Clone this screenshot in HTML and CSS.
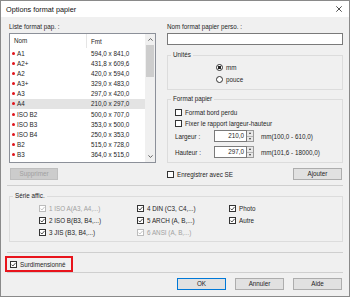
FILE: index.html
```html
<!DOCTYPE html>
<html>
<head>
<meta charset="utf-8">
<title>Options format papier</title>
<link rel="stylesheet" href="styles.css">
</head>
<body>
<div class="window">
  <div class="titlebar">
    <span class="title">Options format papier</span>
    <svg class="close" width="6" height="6" viewBox="0 0 6 6"><path d="M0.3 0.3L5.7 5.7M5.7 0.3L0.3 5.7" stroke="#222" stroke-width="0.8" fill="none"/></svg>
  </div>
  <div class="content">
    <div class="top">
      <div class="label">Liste format pap. :</div>
      <div class="label">Nom format papier perso. :</div>

      <div class="listbox">
        <div class="listmain">
          <div class="listhead"><span class="h1">Nom</span><span class="h2">Fmt</span></div>
          <div class="row"><span class="dot"></span><span class="name">A1</span><span>594,0 x 841,0</span></div>
          <div class="row"><span class="dot"></span><span class="name">A2+</span><span>431,8 x 609,6</span></div>
          <div class="row"><span class="dot"></span><span class="name">A2</span><span>420,0 x 594,0</span></div>
          <div class="row"><span class="dot"></span><span class="name">A3+</span><span>329,0 x 483,0</span></div>
          <div class="row"><span class="dot"></span><span class="name">A3</span><span>297,0 x 420,0</span></div>
          <div class="row selected"><span class="dot"></span><span class="name">A4</span><span>210,0 x 297,0</span></div>
          <div class="row"><span class="dot"></span><span class="name">ISO B2</span><span>500,0 x 707,0</span></div>
          <div class="row"><span class="dot"></span><span class="name">ISO B3</span><span>353,0 x 500,0</span></div>
          <div class="row"><span class="dot"></span><span class="name">ISO B4</span><span>250,0 x 353,0</span></div>
          <div class="row"><span class="dot"></span><span class="name">B2</span><span>515,0 x 728,0</span></div>
          <div class="row"><span class="dot"></span><span class="name">B3</span><span>364,0 x 515,0</span></div>
        </div>
        <div class="scrollbar">
          <div class="sbtn"><svg width="5" height="3" viewBox="0 0 5 3"><path d="M0.4 2.6L2.5 0.6L4.6 2.6" stroke="#555" stroke-width="0.9" fill="none"/></svg></div>
          <div class="thumb"></div>
          <div class="sfill"></div>
          <div class="sbtn"><svg width="5" height="3" viewBox="0 0 5 3"><path d="M0.4 0.4L2.5 2.4L4.6 0.4" stroke="#555" stroke-width="0.9" fill="none"/></svg></div>
        </div>
      </div>

      <div class="rightcol">
        <div class="textinput"></div>
        <fieldset class="group units">
          <legend>Unités</legend>
          <div class="gbody units-body">
            <div class="radio-row"><span class="radio on"></span>mm</div>
            <div class="radio-row"><span class="radio"></span>pouce</div>
          </div>
        </fieldset>
        <fieldset class="group fmt">
          <legend>Format papier</legend>
          <div class="gbody fmt-body">
            <div class="check-row"><span class="cb"></span>Format bord perdu</div>
            <div class="check-row"><span class="cb"></span>Fixer le rapport largeur-hauteur</div>
            <div class="dim-row first">
              <span class="dim-label">Largeur :</span>
              <span class="spin"><span class="spin-val">210,0</span><span class="spin-btns"><span class="up"></span><span class="down"></span></span></span>
              <span class="range">mm(100,0 - 610,0)</span>
            </div>
            <div class="dim-row">
              <span class="dim-label">Hauteur :</span>
              <span class="spin"><span class="spin-val">297,0</span><span class="spin-btns"><span class="up"></span><span class="down"></span></span></span>
              <span class="range">mm(101,6 - 18000,0)</span>
            </div>
          </div>
        </fieldset>
      </div>

      <div class="left-actions"><button class="btn disabled">Supprimer</button></div>
      <div class="save-row">
        <span class="cb"></span>Enregistrer avec SE
        <button class="btn add">Ajouter</button>
      </div>
    </div>

    <div class="sep"></div>

    <fieldset class="group series">
      <legend>Série affic.</legend>
      <div class="gbody series-grid">
        <div class="item off"><span class="cb checked off"><svg width="5" height="5" viewBox="0 0 5 5"><path d="M0.5 2.6L1.9 4L4.6 0.9" stroke="#b5b5b5" stroke-width="0.8" fill="none"/></svg></span>1 ISO A(A3, A4,...)</div>
        <div class="item"><span class="cb checked"><svg width="5" height="5" viewBox="0 0 5 5"><path d="M0.5 2.6L1.9 4L4.6 0.9" stroke="#222" stroke-width="0.8" fill="none"/></svg></span>4 DIN (C3, C4,...)</div>
        <div class="item"><span class="cb checked"><svg width="5" height="5" viewBox="0 0 5 5"><path d="M0.5 2.6L1.9 4L4.6 0.9" stroke="#222" stroke-width="0.8" fill="none"/></svg></span>Photo</div>
        <div class="item"><span class="cb checked"><svg width="5" height="5" viewBox="0 0 5 5"><path d="M0.5 2.6L1.9 4L4.6 0.9" stroke="#222" stroke-width="0.8" fill="none"/></svg></span>2 ISO B(B3, B4,...)</div>
        <div class="item"><span class="cb checked"><svg width="5" height="5" viewBox="0 0 5 5"><path d="M0.5 2.6L1.9 4L4.6 0.9" stroke="#222" stroke-width="0.8" fill="none"/></svg></span>5 ARCH (A, B,...)</div>
        <div class="item"><span class="cb checked"><svg width="5" height="5" viewBox="0 0 5 5"><path d="M0.5 2.6L1.9 4L4.6 0.9" stroke="#222" stroke-width="0.8" fill="none"/></svg></span>Autre</div>
        <div class="item"><span class="cb checked"><svg width="5" height="5" viewBox="0 0 5 5"><path d="M0.5 2.6L1.9 4L4.6 0.9" stroke="#222" stroke-width="0.8" fill="none"/></svg></span>3 JIS (B3, B4,...)</div>
        <div class="item off"><span class="cb checked off"><svg width="5" height="5" viewBox="0 0 5 5"><path d="M0.5 2.6L1.9 4L4.6 0.9" stroke="#b5b5b5" stroke-width="0.8" fill="none"/></svg></span>6 ANSI (A, B,...)</div>
      </div>
    </fieldset>

    <div class="sep sep2"></div>

    <div class="highlight">
      <span class="cb checked"><svg width="5" height="5" viewBox="0 0 5 5"><path d="M0.5 2.6L1.9 4L4.6 0.9" stroke="#222" stroke-width="0.8" fill="none"/></svg></span>Surdimensionné
    </div>

    <div class="sep sep3"></div>

    <div class="buttons">
      <button class="btn default">OK</button>
      <button class="btn">Annuler</button>
      <button class="btn">Aide</button>
    </div>
  </div>
</div>
</body>
</html>
```

FILE: styles.css
```css
* { box-sizing: border-box; }

html, body {
  margin: 0;
  padding: 0;
  background: #f0f0f0;
}

body {
  font-family: "Liberation Sans", Arial, sans-serif;
  font-size: 6.3px;
  color: #1e1e1e;
}

.window {
  width: 350px;
  height: 297px;
  border: 1px solid #8a8a8a;
  background: #f0f0f0;
  display: flex;
  flex-direction: column;
  overflow: hidden;
}

.titlebar {
  height: 16px;
  background: #ffffff;
  display: flex;
  align-items: center;
  padding: 0 7px 0 5px;
  flex: none;
}

.title {
  font-size: 7.3px;
  color: #111;
  flex: 1;
}

.close { display: block; }

.content {
  padding: 0 6px 0 6px;
  display: flex;
  flex-direction: column;
}

/* ---------- top area ---------- */
.top {
  display: grid;
  grid-template-columns: 147px 176px;
  column-gap: 11px;
  margin: 5px 0 0 2px;
}

.label {
  height: 10px;
  line-height: 10px;
  margin-bottom: 1px;
  white-space: nowrap;
}

.listbox {
  height: 130px;
  border: 1px solid #8c9099;
  background: #fff;
  display: flex;
}

.listmain {
  flex: 1;
  display: flex;
  flex-direction: column;
}

.listhead {
  height: 14px;
  display: flex;
  align-items: center;
}

.h1 {
  width: 77px;
  padding-left: 4px;
  height: 14px;
  line-height: 14px;
  border-right: 1px solid #e5e5e5;
}

.h2 {
  padding-left: 4px;
}

.row {
  height: 10.17px;
  display: flex;
  align-items: center;
  padding-left: 2px;
  white-space: nowrap;
}

.row.selected { background: #e3e3e3; }

.dot {
  width: 3px;
  height: 3px;
  border-radius: 50%;
  background: #e0141c;
  margin-right: 2px;
  flex: none;
}

.name { width: 74px; flex: none; }

.scrollbar {
  width: 10px;
  background: #f0f0f0;
  display: flex;
  flex-direction: column;
}

.sbtn {
  height: 11px;
  display: flex;
  align-items: center;
  justify-content: center;
  flex: none;
}

.sbtn svg { display: block; }

.thumb {
  height: 32px;
  margin: 0 1px;
  background: #cdcdcd;
  flex: none;
}

.sfill { flex: 1; }

.rightcol {
  display: flex;
  flex-direction: column;
}

.textinput {
  height: 12px;
  border: 1px solid #7a7a7a;
  background: #fff;
  margin-bottom: 6px;
}

.group {
  margin: 0;
  padding: 0;
  border: 1px solid #dcdcdc;
  min-inline-size: 0;
}

.group legend {
  padding: 0 2px;
  margin-left: 3px;
  line-height: 8px;
  height: 8px;
}

.units-body {
  padding: 3px 0 5px 48px;
}

.radio-row {
  height: 10px;
  display: flex;
  align-items: center;
}

.radio-row + .radio-row { margin-top: 2px; }

.radio {
  width: 7px;
  height: 7px;
  border: 1px solid #333;
  border-radius: 50%;
  background: #fff;
  margin-right: 3px;
  flex: none;
}

.radio.on {
  background: radial-gradient(circle, #222 0 1.5px, #fff 1.9px);
}

.fmt {
  margin-top: 5px;
}

.fmt-body {
  padding: 4px 0 4px 7px;
}

.check-row {
  height: 10px;
  display: flex;
  align-items: center;
  white-space: nowrap;
}

.check-row + .check-row { margin-top: 1px; }

.cb {
  width: 7px;
  height: 7px;
  border: 1px solid #333;
  background: #fff;
  margin-right: 3px;
  flex: none;
  display: inline-flex;
  align-items: center;
  justify-content: center;
}

.cb svg { display: block; }

.cb.off { border-color: #bcbcbc; }

.dim-row {
  height: 12px;
  display: flex;
  align-items: center;
  margin-top: 4px;
  white-space: nowrap;
}

.dim-row.first { margin-top: 2px; }

.dim-label { width: 39px; flex: none; }

.spin {
  display: flex;
  height: 12px;
  flex: none;
}

.spin-val {
  width: 33px;
  border: 1px solid #7a7a7a;
  background: #fff;
  text-align: right;
  padding-right: 2px;
  line-height: 10px;
}

.spin-btns {
  width: 7px;
  display: flex;
  flex-direction: column;
  border: 1px solid #9a9a9a;
  border-left: none;
  background: #e8e8e8;
}

.spin-btns span {
  flex: 1;
  display: flex;
  align-items: center;
  justify-content: center;
}

.spin-btns .up { border-bottom: 1px solid #b5b5b5; }

.spin-btns .up::after {
  content: "";
  border-left: 1.5px solid transparent;
  border-right: 1.5px solid transparent;
  border-bottom: 2px solid #333;
}

.spin-btns .down::after {
  content: "";
  border-left: 1.5px solid transparent;
  border-right: 1.5px solid transparent;
  border-top: 2px solid #333;
}

.range { margin-left: 7px; }

.left-actions {
  margin-top: 5px;
  padding-left: 1px;
}

.btn {
  font: inherit;
  color: #1e1e1e;
  margin: 0;
  padding: 0;
  width: 49px;
  height: 12px;
  background: #e1e1e1;
  border: 1px solid #adadad;
  text-align: center;
  line-height: 10px;
}

.btn.disabled {
  width: 48px;
  background: #cccccc;
  border-color: #bfbfbf;
  color: #a0a0a0;
}

.btn.default { border-color: #0078d7; }

.save-row {
  margin-top: 5px;
  height: 12px;
  display: flex;
  align-items: center;
  white-space: nowrap;
}

.save-row .btn.add { margin-left: auto; margin-right: 1px; }

/* ---------- separators ---------- */
.sep {
  height: 1px;
  background: #cfcfcf;
  margin-top: 5px;
}

.sep2 { margin-top: 10px; }
.sep3 { margin-top: 0; }

/* ---------- series ---------- */
.series {
  margin-top: 6px;
  margin-left: 2px;
}

.series-grid {
  padding: 2px 0 3px 29px;
  display: grid;
  grid-template-columns: 98px 92px auto;
  grid-auto-rows: 12px;
}

.item {
  display: flex;
  align-items: center;
  white-space: nowrap;
}

.item.off { color: #a0a0a0; }

/* ---------- surdimensionné ---------- */
.highlight {
  margin: 3px 0 0 -2px;
  width: 68px;
  height: 16px;
  border: 2px solid #e8141c;
  display: flex;
  align-items: center;
  padding-left: 3px;
  white-space: nowrap;
}

.buttons {
  margin-top: 5px;
  display: flex;
  justify-content: flex-end;
  gap: 9px;
  padding-right: 1px;
}
```
